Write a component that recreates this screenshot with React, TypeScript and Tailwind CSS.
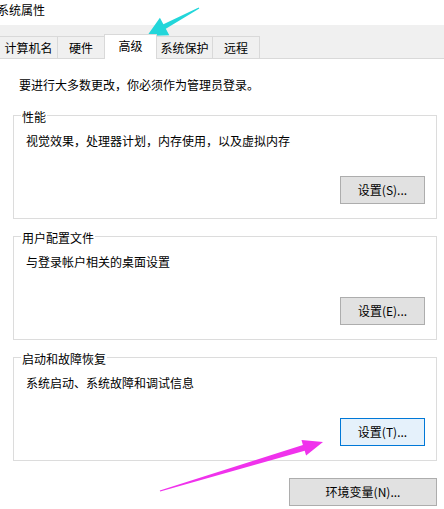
const tabs = [
  { label: '计算机名', w: 'w-[59px]', first: true },
  { label: '硬件', w: 'w-[47px]' },
  { label: '高级', w: 'w-[53px]', active: true },
  { label: '系统保护', w: 'w-[56px]' },
  { label: '远程', w: 'w-[47px]' },
];

const groups = [
  { title: '性能', desc: '视觉效果，处理器计划，内存使用，以及虚拟内存', btn: '设置(S)...' },
  { title: '用户配置文件', desc: '与登录帐户相关的桌面设置', btn: '设置(E)...' },
  { title: '启动和故障恢复', desc: '系统启动、系统故障和调试信息', btn: '设置(T)...', focus: true },
];

function WinButton({ label, focus, w = 'w-[85px]' }: { label: string; focus?: boolean; w?: string }) {
  return (
    <button
      className={`${w} h-[28px] border text-[12px] leading-[16px] text-black ${
        focus ? 'bg-[#e5f1fb] border-[#0078d7]' : 'bg-[#e1e1e1] border-[#adadad]'
      }`}
    >
      {label}
    </button>
  );
}

export default function App() {
  return (
    <div
      className="relative w-[444px] h-[509px] overflow-hidden bg-white text-black text-[12px] leading-[16px]"
      style={{ fontFamily: '"Noto Sans CJK SC", "Noto Sans", sans-serif' }}
    >
      {/* title */}
      <div className="h-[25px] pt-[2px] ml-[-3px]">系统属性</div>

      {/* tab strip */}
      <div className="h-[34px] bg-[#f0f0f0] border-b border-[#d9d9d9] flex items-end">
        {tabs.map((t) =>
          t.active ? (
            <div
              key={t.label}
              className={`${t.w} h-[25px] -ml-[1px] -mb-[1px] relative z-10 bg-white border-t border-l border-r border-[#d9d9d9] flex items-center justify-center pb-[3px]`}
            >
              {t.label}
            </div>
          ) : (
            <div
              key={t.label}
              className={`${t.w} h-[22px] border-t border-r border-[#d9d9d9] flex items-center justify-center ${
                t.first ? 'border-l -ml-[1px]' : ''
              }`}
            >
              {t.label}
            </div>
          ),
        )}
      </div>

      {/* body */}
      <div className="pt-[18px]">
        <p className="pl-[19px]">要进行大多数更改，你必须作为管理员登录。</p>

        <div className="mt-[22px] flex flex-col gap-[17px]">
          {groups.map((g) => (
            <div key={g.title} className="relative ml-[13px] w-[424px] border border-[#dcdcdc] pt-[17px] pl-[12px] pr-[11px] pb-[14px]">
              <span className="absolute -top-[7px] left-[7px] bg-white px-[1px]">{g.title}</span>
              <p>{g.desc}</p>
              <div className="mt-[27px] flex justify-end">
                <WinButton label={g.btn} focus={g.focus} />
              </div>
            </div>
          ))}
        </div>

        <div className="mt-[17px] ml-[289px]">
          <WinButton label="环境变量(N)..." w="w-[148px]" />
        </div>
      </div>

      {/* annotation arrows */}
      <svg className="absolute inset-0 pointer-events-none" width="444" height="509" viewBox="0 0 444 509">
        <polygon
          fill="#22d6da"
          points="199.3,8.5 165.8,28.7 169.3,35.3 147,36 159.9,17.7 163.4,24.3 198.7,7.5"
        />
        <polygon
          fill="#f032ec"
          points="160.2,491.5 304.7,450.7 306.1,455.5 323,442 301.5,440.1 302.9,444.9 159.8,490.5"
        />
      </svg>
    </div>
  );
}
